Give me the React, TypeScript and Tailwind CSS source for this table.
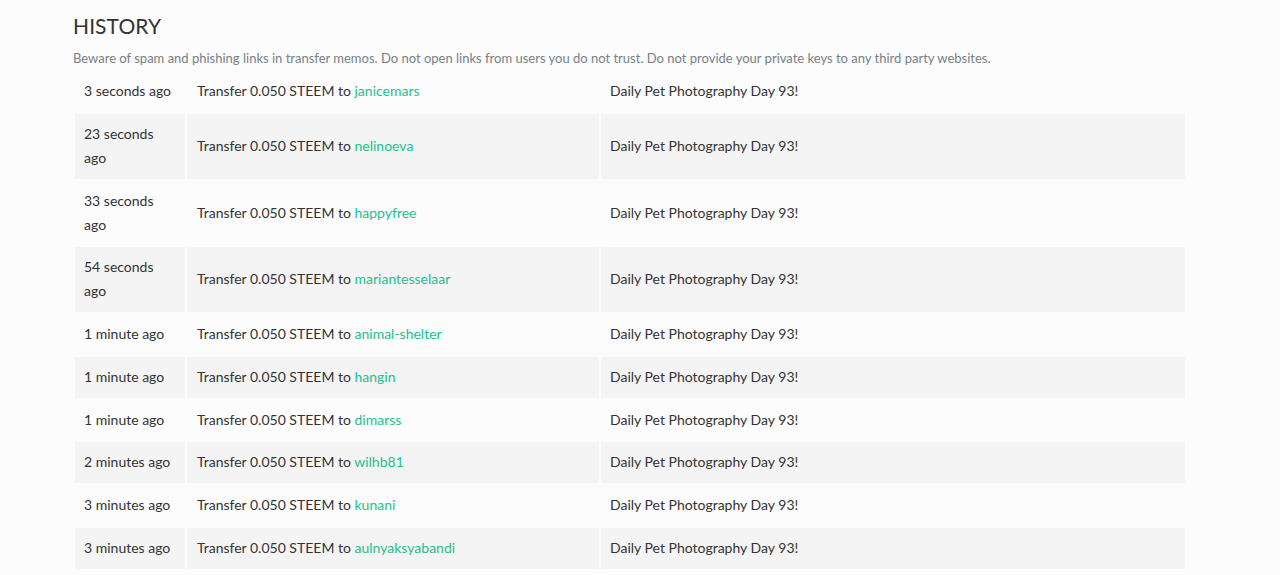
import React from "react";

const rows: { time: string; to: string }[] = [
  { time: "3 seconds ago", to: "janicemars" },
  { time: "23 seconds ago", to: "nelinoeva" },
  { time: "33 seconds ago", to: "happyfree" },
  { time: "54 seconds ago", to: "mariantesselaar" },
  { time: "1 minute ago", to: "animal-shelter" },
  { time: "1 minute ago", to: "hangin" },
  { time: "1 minute ago", to: "dimarss" },
  { time: "2 minutes ago", to: "wilhb81" },
  { time: "3 minutes ago", to: "kunani" },
  { time: "3 minutes ago", to: "aulnyaksyabandi" },
];

export default function App() {
  return (
    <div
      className="min-h-[575px] w-full bg-[#fcfcfc] text-[#333]"
      style={{ fontFamily: "Lato, 'Noto Sans', 'Liberation Sans', sans-serif" }}
    >
      <div className="ml-[73px] w-[1114px] pt-[12px]">
        <h4 className="text-[21px] leading-[28px] text-[#333] tracking-[0.1px]">HISTORY</h4>
        <p className="mt-[8px] text-[13px] leading-[20px] text-[#788187]">
          Beware of spam and phishing links in transfer memos. Do not open links from users you do not trust. Do not provide your private keys to any third party websites.
        </p>
        <table className="mt-[1px] w-[1114px] border-separate border-spacing-[2px] text-[14px] leading-[24px] text-[#333]">
          <tbody>
            {rows.map((r, i) => (
              <tr key={i} className={i % 2 === 1 ? "bg-[#f4f4f4]" : ""}>
                <td className="w-[110px] pl-[9px] pr-[8px] pt-[8px] pb-[8.75px] align-middle">{r.time}</td>
                <td className="w-[412px] pl-[10px] pr-[8px] pt-[8px] pb-[8.75px] align-middle">
                  Transfer 0.050 STEEM to <a className="text-[#1fbf8f]">{r.to}</a>
                </td>
                <td className="pl-[9px] pr-[8px] pt-[8px] pb-[8.75px] align-middle">Daily Pet Photography Day 93!</td>
              </tr>
            ))}
          </tbody>
        </table>
      </div>
    </div>
  );
}
